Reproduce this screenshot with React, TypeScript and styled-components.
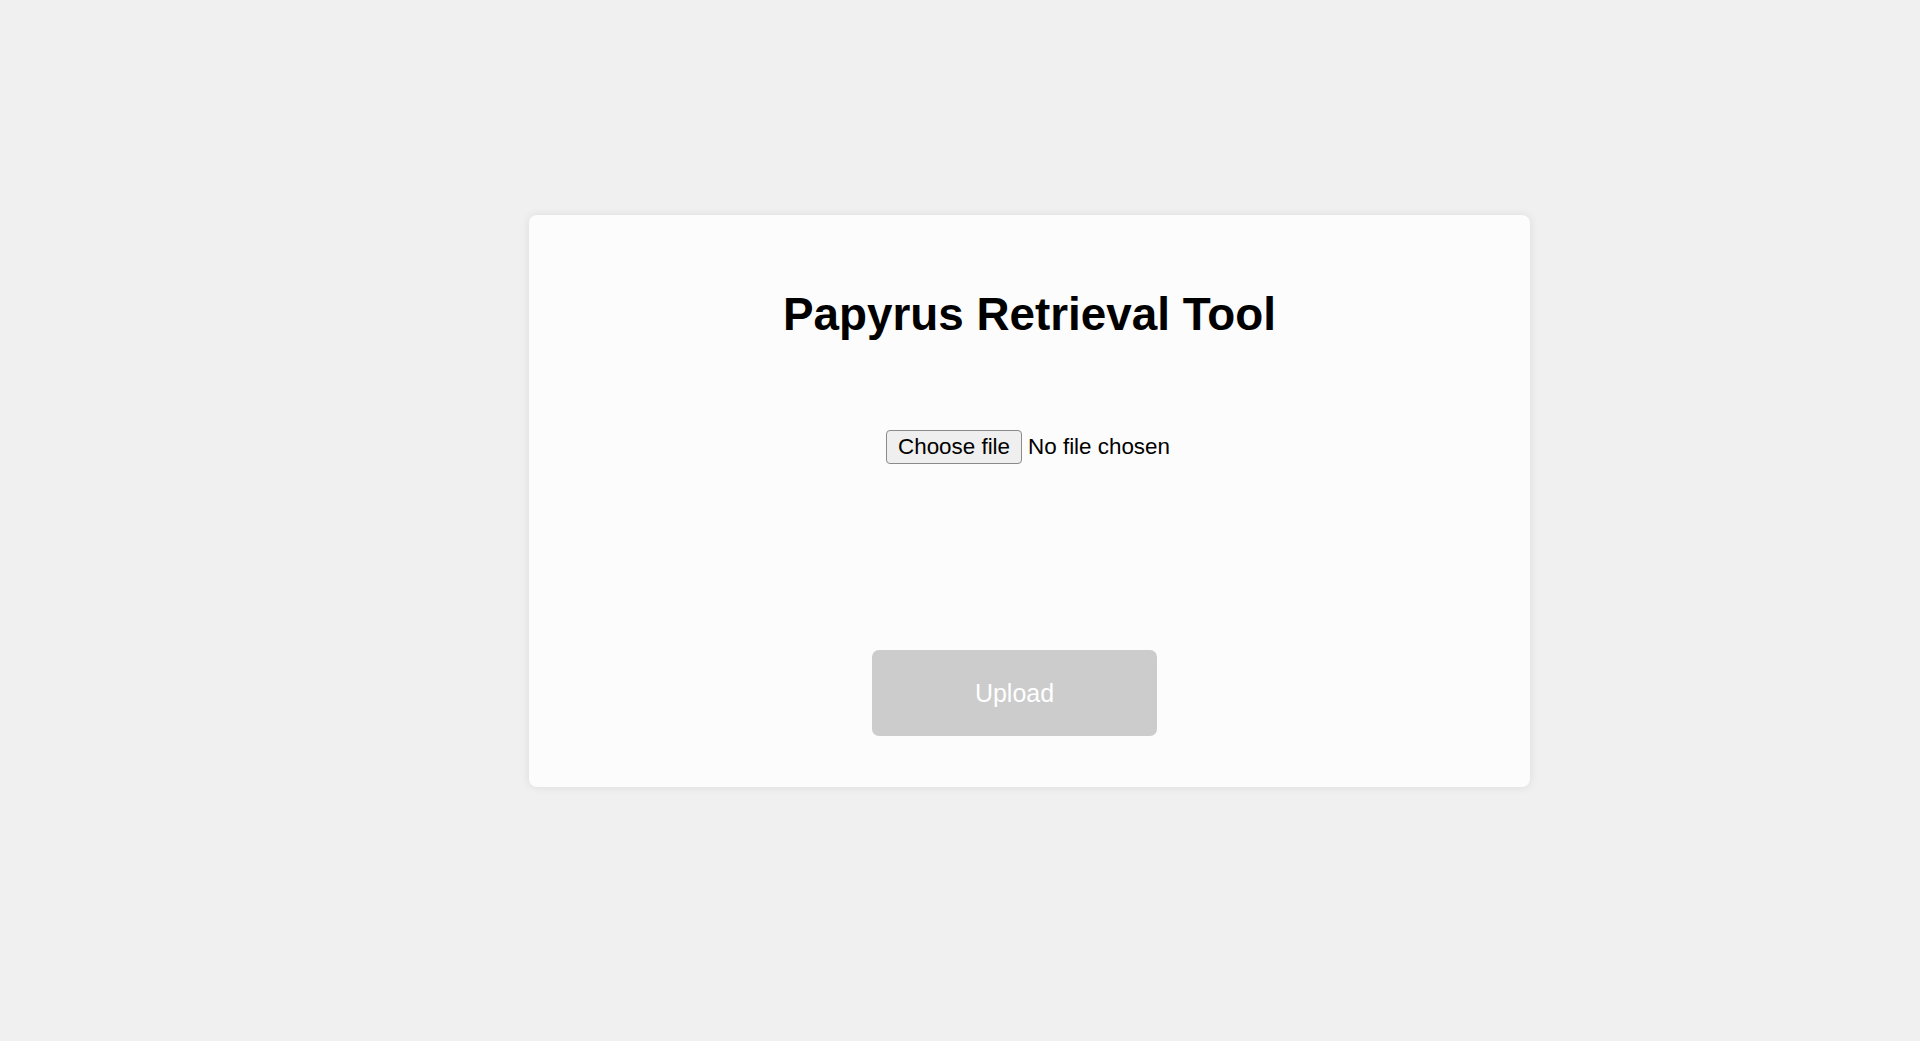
import React, { useState } from "react";
import styled, { createGlobalStyle } from "styled-components";

const Global = createGlobalStyle`
  html, body {
    margin: 0;
    padding: 0;
    background: #f0f0f0;
    font-family: "Liberation Sans", Arial, sans-serif;
  }
`;

const Page = styled.div`
  min-height: 1041px;
  box-sizing: border-box;
  padding: 215px 0 0 529px;
  display: flex;
  align-items: flex-start;
`;

const Card = styled.div`
  width: 1001px;
  height: 572px;
  box-sizing: border-box;
  background: #fcfcfc;
  border-radius: 8px;
  box-shadow: 0 0 10px rgba(0, 0, 0, 0.09);
  display: flex;
  flex-direction: column;
  align-items: center;
  padding-top: 74px;
`;

const Title = styled.h1`
  margin: 0;
  font-size: 45.8px;
  line-height: 52px;
  font-weight: 700;
  color: #000;
`;

const FileRow = styled.div`
  margin-top: 89px;
  display: flex;
  align-items: center;
  gap: 6px;
  height: 34px;
  font-size: 22.4px;
  color: #000;
  padding-right: 3px;
`;

const ChooseButton = styled.label`
  display: inline-flex;
  align-items: center;
  box-sizing: border-box;
  height: 34px;
  padding: 0 11px;
  background: #efefef;
  border: 1px solid #8a8a8a;
  border-radius: 4px;
  cursor: default;
`;

const HiddenInput = styled.input`
  display: none;
`;

const FileName = styled.span`
  white-space: nowrap;
`;

const UploadButton = styled.button`
  margin-top: 186px;
  margin-right: 30px;
  width: 285px;
  height: 86px;
  border: none;
  border-radius: 7px;
  background: #cccccc;
  color: #ffffff;
  font-family: "Liberation Sans", Arial, sans-serif;
  font-size: 25px;
  cursor: not-allowed;
`;

export default function App() {
  const [name, setName] = useState<string | null>(null);
  return (
    <>
      <Global />
      <Page>
        <Card>
          <Title>Papyrus Retrieval Tool</Title>
          <FileRow>
            <ChooseButton>
              Choose file
              <HiddenInput
                type="file"
                onChange={(e) => setName(e.target.files?.[0]?.name ?? null)}
              />
            </ChooseButton>
            <FileName>{name ?? "No file chosen"}</FileName>
          </FileRow>
          <UploadButton disabled={!name}>Upload</UploadButton>
        </Card>
      </Page>
    </>
  );
}
